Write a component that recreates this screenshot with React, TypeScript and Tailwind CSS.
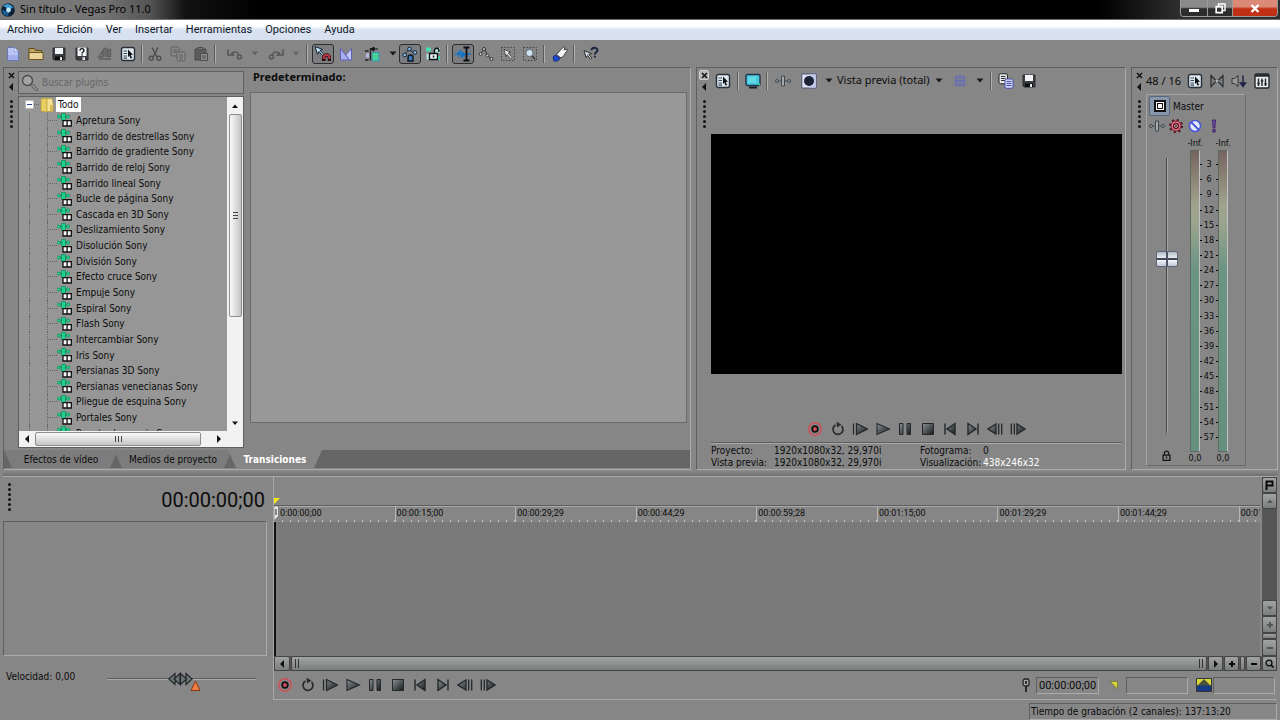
import { useState, type ReactNode } from "react";
import clsx from "clsx";

const MENUS = ["Archivo", "Edición", "Ver", "Insertar", "Herramientas", "Opciones", "Ayuda"];

const TRANSITIONS = [
  "Apretura Sony",
  "Barrido de destrellas Sony",
  "Barrido de gradiente Sony",
  "Barrido de reloj Sony",
  "Barrido lineal Sony",
  "Bucle de página Sony",
  "Cascada en 3D Sony",
  "Deslizamiento Sony",
  "Disolución Sony",
  "División Sony",
  "Efecto cruce Sony",
  "Empuje Sony",
  "Espiral Sony",
  "Flash Sony",
  "Intercambiar Sony",
  "Iris Sony",
  "Persianas 3D Sony",
  "Persianas venecianas Sony",
  "Pliegue de esquina Sony",
  "Portales Sony",
  "Puente de espejo Sony",
];

const RULER = [
  "0:00:00;00",
  "00:00:15;00",
  "00:00:29;29",
  "00:00:44;29",
  "00:00:59;28",
  "00:01:15;00",
  "00:01:29;29",
  "00:01:44;29",
  "00:01:59;28",
];

const DB_MARKS = [3, 6, 9, 12, 15, 18, 21, 24, 27, 30, 33, 36, 39, 42, 45, 48, 51, 54, 57];

const SUNKEN = "border border-t-[#5f5f5f] border-l-[#5f5f5f] border-r-[#ababab] border-b-[#ababab]";
const SCROLL_BTN =
  "flex items-center justify-center rounded-[2px] border border-[#444] bg-linear-to-b from-[#a2a4a4] to-[#7b7e7e]";

/* ---------- icons ---------- */

function Svg({ size = 16, children }: { size?: number; children: ReactNode }) {
  return (
    <svg width={size} height={size} viewBox="0 0 16 16" fill="none" aria-hidden="true" className="shrink-0">
      {children}
    </svg>
  );
}

const NewIcon = () => (
  <Svg>
    <path d="M2.500 1.500h7l4 4v9h-11z" fill="#b9c4f4" stroke="#6a78b8" />
    <path d="M9.500 1.500v4h4z" fill="#eef1ff" stroke="#8090cc" strokeWidth=".7" />
    <path d="M3 9h10v5H3z" fill="#93a2e4" opacity=".6" />
  </Svg>
);

const OpenIcon = () => (
  <Svg>
    <path d="M1 13.500v-11h5.500l1 2h6v9z" fill="#c5a45c" stroke="#5d4a20" />
    <path d="M1 13.500v-7h14v7z" fill="#ead49a" stroke="#6b5526" />
  </Svg>
);

const SaveIcon = () => (
  <Svg>
    <path d="M2 2h12v12H3l-1-1z" fill="#3a3d42" stroke="#2b2d30" />
    <path d="M4 2h8v6H4z" fill="#f1f3f5" />
    <path d="M4 10.500h8V14H4z" fill="#0a0a0a" />
    <path d="M9 11h2v3H9z" fill="#e8e8e8" />
  </Svg>
);

const SaveAsIcon = () => (
  <Svg>
    <path d="M2 2h12v12H3l-1-1z" fill="#3a3d42" stroke="#2b2d30" />
    <path d="M3.500 1.500h9V10h-9z" fill="#f1f3f5" />
    <path d="M6 4.500c0-2.500 4-2.500 4 0 0 1.500-2 1.400-2 3" stroke="#111" strokeWidth="1.400" />
    <path d="M7.300 8.200h1.500v1.300H7.300zM9 11h2v3H9z" fill="#111" />
    <path d="M8.500 11.200H11V14H8.500z" fill="#e8e8e8" />
  </Svg>
);

const RenderIcon = () => (
  <Svg>
    <path d="M1.500 11l4-6v6zM7 11V2.500h2V11M10.500 3.500h3v7h-3z" stroke="#5e5e5e" strokeWidth="1.300" />
    <path d="M2 13h12M10 5.500h4M10 8.500h4" stroke="#5e5e5e" strokeWidth="1.300" />
  </Svg>
);

const PropsIcon = () => (
  <Svg>
    <rect x="1.500" y="1.500" width="13" height="13" rx="2" fill="#dfe7ef" stroke="#27303a" strokeWidth="1.400" />
    <path d="M3.500 5H7M3.500 7.500H7M3.500 10H7M3.500 12.200H7" stroke="#364657" strokeWidth="1.200" />
    <path d="M8 3.500l5 5.200-2.300.2 1.500 3-1.600.7-1.300-3L8 11.200z" fill="#0c0f12" />
  </Svg>
);

const CutIcon = () => (
  <Svg>
    <path d="M5 1.500l5 9.500M11 1.500L6 11" stroke="#4e4e4e" strokeWidth="1.500" />
    <circle cx="4.200" cy="12.300" r="2" stroke="#4e4e4e" strokeWidth="1.400" />
    <circle cx="11.800" cy="12.300" r="2" stroke="#4e4e4e" strokeWidth="1.400" />
  </Svg>
);

const CopyIcon = () => (
  <Svg>
    <rect x="1" y="1" width="8" height="9" rx="1.500" stroke="#5e5e5e" />
    <path d="M3 4h4M3 6h4" stroke="#5e5e5e" />
    <rect x="7" y="6" width="8" height="9" rx="1.500" fill="#8c8c8c" stroke="#5e5e5e" />
    <path d="M9 9h4M9 11h4M9 13h4" stroke="#5e5e5e" />
  </Svg>
);

const PasteIcon = () => (
  <Svg>
    <path d="M2 3h11v11H2z" fill="#5d5d5d" stroke="#4b4b4b" />
    <path d="M5 1.500h5V4H5z" fill="#777" stroke="#4b4b4b" />
    <path d="M7.500 7.500h7v7h-7z" fill="#8f8f8f" stroke="#4b4b4b" />
    <path d="M9 10h4M9 12h4" stroke="#4b4b4b" />
  </Svg>
);

const UndoIcon = () => (
  <Svg>
    <path d="M1 3.500V9h5.500L4.700 7.200C8 5 11 6 11.500 9" stroke="#545454" strokeWidth="1.500" />
    <circle cx="12.500" cy="11" r="2" stroke="#545454" strokeWidth="1.400" />
  </Svg>
);

const RedoIcon = () => (
  <Svg>
    <path d="M15 3.500V9H9.500l1.800-1.800C8 5 5 6 4.500 9" stroke="#545454" strokeWidth="1.500" />
    <circle cx="3.500" cy="11" r="2" stroke="#545454" strokeWidth="1.400" />
  </Svg>
);

const SnapIcon = () => (
  <Svg>
    <path d="M0 .5l7.500 3-2.500 1 4 4-1.200 1.200-4-4.200-1.300 2.800z" fill="#c8e4f6" stroke="#0d2236" />
    <path d="M8.700 15v-3a2.900 2.900 0 0 1 5.800 0v3" stroke="#2a080c" strokeWidth="3.600" />
    <path d="M8.700 13v-1a2.900 2.900 0 0 1 5.800 0v1" stroke="#c03848" strokeWidth="2" />
  </Svg>
);

const FadeIcon = () => (
  <Svg>
    <path d="M2.500 2.500l9 11.500h-9z" fill="#a9aef2" stroke="#5c60b8" />
    <path d="M13.500 2.500v11.500h-2L7.700 9z" fill="#c3c6f8" stroke="#5c60b8" />
  </Svg>
);

const RippleIcon = () => (
  <Svg>
    <path d="M6.500 2v12.500M1 5h3.500M1 14h3.500" stroke="#222" strokeWidth="1.400" />
    <path d="M2 7.500h3v4H2z" fill="#b8bfe8" />
    <path d="M8 6.500h7V15H8z" fill="#45cf9c" stroke="#3c8fb0" />
    <path d="M7 3h7M7 3l3-2v4z" fill="#111" stroke="#111" />
  </Svg>
);

const EnvelopeLockIcon = () => (
  <Svg>
    <path d="M2 9l5-6 6 5" stroke="#1a2c44" />
    <circle cx="2.700" cy="9" r="1.800" fill="#8cc4ee" stroke="#123" />
    <circle cx="7.500" cy="3" r="1.800" fill="#8cc4ee" stroke="#123" />
    <circle cx="13" cy="6.500" r="1.800" fill="#8cc4ee" stroke="#123" />
    <path d="M6 15v-3.500a2.500 2.500 0 0 1 5 0V15z" fill="#3d78b8" stroke="#0b1726" strokeWidth="1.400" />
  </Svg>
);

const GroupLockIcon = () => (
  <Svg>
    <path d="M1 1.500h5v4H1zM9 10h6v4H9z" fill="#48dcb0" />
    <path d="M1.500 7.500h5v6h-5zM9 2h6v5H9z" fill="#b9e2e2" />
    <path d="M4.500 7.500h8v6h-8z" fill="#e7f6f4" stroke="#101416" strokeWidth="1.400" />
    <path d="M9.500 7V4.500a2.200 2.200 0 0 1 4.400 0V6" stroke="#101416" strokeWidth="1.500" />
    <path d="M8.500 9.500v2" stroke="#101416" strokeWidth="1.500" />
  </Svg>
);

const WaveIcon = () => (
  <Svg>
    <path d="M0 8h2l1-1.500L4 10l1.500-6L7 12l1-6 1 4 .8-2H16" stroke="#0f74c8" strokeWidth="1.300" />
    <path d="M8.500 1.500h6M8.500 14.500h6M11.500 1.500v13" stroke="#0a0d12" strokeWidth="1.800" />
  </Svg>
);

const EnvelopeIcon = () => (
  <Svg>
    <path d="M2 8l4.500-5 3 6.500L13.500 13" stroke="#333" />
    <g fill="#d4d4d4" stroke="#333">
      <circle cx="2.500" cy="8" r="1.500" />
      <circle cx="6" cy="3" r="1.500" />
      <circle cx="9.500" cy="9.500" r="1.500" />
      <circle cx="13.500" cy="13" r="1.500" />
    </g>
  </Svg>
);

const SelectIcon = () => (
  <Svg>
    <path d="M1.500 1.500h13v13h-13z" stroke="#444" strokeDasharray="1.500 1.500" />
    <path d="M4 3.500l6.500 2.500-2.300 1 4 4.500-1.400 1.200-3.800-4.200-1 2.200z" fill="#eee" stroke="#333" strokeWidth=".8" />
  </Svg>
);

const ZoomIcon = () => (
  <Svg>
    <path d="M1.500 1.500h13v13h-13z" stroke="#444" strokeDasharray="1.500 1.500" />
    <circle cx="7.500" cy="7" r="3.600" fill="#cfe2ee" stroke="#5b6f7c" />
    <path d="M10 10l3 3" stroke="#333" strokeWidth="1.600" />
  </Svg>
);

const HandIcon = () => (
  <Svg>
    <path d="M4.500 8.500L9 3.500 11.500.8l1.500.7-1 2.300 3-.6.300 1.600-1.300 1.200L12 9.500 9 12z" fill="#f4f4f4" stroke="#333" strokeWidth=".9" />
    <path d="M1.200 11l2-2L8 12.500 5.500 15H2z" fill="#1f49d6" stroke="#102a80" />
  </Svg>
);

const HelpIcon = () => (
  <Svg>
    <path d="M1 4.500l7.500 3-2.700 1 3 3.500-1.300 1-3-3.500-1.500 2z" fill="#cfd6dd" stroke="#222" strokeWidth=".9" />
    <path d="M8.500 4.300C8.500 1 14.500 1 14.500 4.200c0 2-2.700 2-2.700 4.300" stroke="#1b2440" strokeWidth="1.900" />
    <path d="M10.900 9.700h1.900v1.800h-1.900z" fill="#1b2440" />
  </Svg>
);

const MonitorIcon = () => (
  <Svg>
    <rect x="1" y="1.500" width="14" height="11" rx="1.500" fill="#45c9dd" stroke="#22324a" strokeWidth="1.400" />
    <path d="M3 4l8-1v7H3z" fill="#6fe0ea" opacity=".7" />
    <path d="M12 12l3-2v2.500z" fill="#2fd090" />
    <path d="M4 14.500h8" stroke="#16202c" strokeWidth="2" />
  </Svg>
);

const FxIcon = () => (
  <Svg>
    <path d="M3.500 8h9" stroke="#4a555c" />
    <path d="M6.500 3h3v10h-3z" fill="#a3a9ac" stroke="#3f4a50" />
    <circle cx="2" cy="8" r="1.500" fill="#8f979b" stroke="#3f4a50" />
    <circle cx="14" cy="8" r="1.500" fill="#8f979b" stroke="#3f4a50" />
  </Svg>
);

const SplitIcon = () => (
  <Svg>
    <path d="M.8 1h14.400v14H.8z" fill="#dfe3f4" stroke="#4c5674" />
    <path d="M8.500 1.500h6.200v13H8.500z" fill="#c3caea" />
    <circle cx="8" cy="8" r="5" fill="#1b2236" />
  </Svg>
);

const GridIcon = () => (
  <Svg>
    <path d="M4.500 2v12M8 2v12M11.500 2v12M2 4.500h12M2 8h12M2 11.500h12" stroke="#6a6fb4" strokeWidth="1.400" />
  </Svg>
);

const CopyFrameIcon = () => (
  <Svg>
    <rect x="1" y=".8" width="8.500" height="10" rx="1.500" fill="#e4e6ea" stroke="#222" />
    <path d="M3 3.500h4.500M3 5.500h4.500M3 7.500h4.500" stroke="#333" />
    <rect x="7" y="6" width="8" height="9.300" rx="1.500" fill="#cfd4fb" stroke="#4a52a8" />
    <path d="M8.500 8.500h5M8.500 10.500h5M8.500 12.500h5" stroke="#4a52a8" />
  </Svg>
);

const DownmixIcon = () => (
  <Svg>
    <path d="M2 2v12l4-4h4l4 4V2l-4 4.500H6z" fill="#7b7f82" />
    <path d="M2 1.500v13M14 1.500v13M2 2.500L6.500 7v2L2 13.500M14 2.500L9.500 7v2l4.500 4.500" stroke="#2c2f31" strokeWidth="1.200" />
    <path d="M6.500 8h3" stroke="#c0c4c6" strokeWidth="1.600" />
  </Svg>
);

const DimIcon = () => (
  <Svg>
    <path d="M1 5.500h2.500L7 2.500v11l-3.500-3H1z" fill="#979b9d" stroke="#333" />
    <path d="M12 2.500v10M9.500 10l2.500 3.500 2.500-3.500z" fill="#222446" stroke="#222446" strokeWidth="1.500" />
  </Svg>
);

const MixerIcon = () => (
  <Svg>
    <rect x="1" y="1" width="14" height="14" rx="1.500" fill="#e8eaec" stroke="#22272c" strokeWidth="1.400" />
    <path d="M1 2.500h14" stroke="#22272c" strokeWidth="2.500" />
    <path d="M4.500 5.500v7.500M8 5.500v7.500M11.500 5.500v7.500" stroke="#22272c" strokeWidth="1.400" />
    <path d="M3.300 10.500h2.500M6.800 8h2.500M10.300 11h2.500" stroke="#22272c" strokeWidth="1.400" />
  </Svg>
);

const GearIcon = () => (
  <Svg>
    <circle cx="8" cy="8" r="6" stroke="#4a1420" strokeWidth="2.200" strokeDasharray="2 2.712" />
    <circle cx="8" cy="8" r="5" fill="#ea7088" stroke="#7a1c30" />
    <circle cx="8" cy="8" r="2.400" fill="#f6d4da" stroke="#3a0c14" strokeWidth="1.200" />
    <circle cx="8" cy="8" r=".9" fill="#3a0c14" />
  </Svg>
);

const MuteIcon = () => (
  <Svg>
    <circle cx="8" cy="8" r="5.500" fill="#e8ecff" stroke="#4b5bd8" strokeWidth="1.600" />
    <path d="M4.500 4.500l7 7" stroke="#4b5bd8" strokeWidth="2" />
  </Svg>
);

const SoloIcon = () => (
  <Svg>
    <path d="M6.500 2h3l-.7 8H7.200z" fill="#7a4bb8" stroke="#38205c" strokeWidth=".9" />
    <path d="M6.800 11.500h2.400V14H6.800z" fill="#7a4bb8" stroke="#38205c" strokeWidth=".9" />
  </Svg>
);

const LockIcon = () => (
  <Svg size={11}>
    <path d="M3 7.500h10V15H3z" stroke="#111" strokeWidth="1.800" />
    <path d="M5 7V4.500a3 3 0 0 1 6 0V7M8 9.500v3" stroke="#111" strokeWidth="1.800" />
  </Svg>
);

const PluginIcon = () => (
  <svg width="15" height="14" viewBox="0 0 15 14" fill="none" aria-hidden="true" className="shrink-0">
    <path d="M2 3.500h10" stroke="#0b5c3c" strokeWidth="1.300" />
    <path d="M4.500.5h4v7h-4z" fill="#1fd08c" stroke="#0c8a58" strokeWidth=".7" />
    <circle cx="1.900" cy="3.600" r="1.600" fill="#1fd08c" stroke="#0c8a58" strokeWidth=".6" />
    <circle cx="11" cy="3.600" r="1.700" fill="#1fd08c" stroke="#0c8a58" strokeWidth=".6" />
    <path d="M6 7.700h8.300v5.300H6z" fill="#f4f4f4" stroke="#111" strokeWidth="1.300" />
    <path d="M10.100 8v5" stroke="#111" strokeWidth="1.300" />
  </svg>
);

const FolderIcon = () => (
  <Svg>
    <path d="M2 2l6-1v14l-6-1z" fill="#e9cf62" stroke="#b8992e" strokeWidth=".6" />
    <path d="M8 1.500h5l1 5v8H8z" fill="#f3e295" stroke="#b8992e" strokeWidth=".6" />
    <path d="M11 8h2.500v6H11z" fill="#d8b84a" />
  </Svg>
);

const SearchIcon = () => (
  <svg width="18" height="18" viewBox="0 0 18 18" fill="none" aria-hidden="true" className="shrink-0">
    <circle cx="6.500" cy="6.500" r="5" fill="#a3a3a3" stroke="#4a4a4a" strokeWidth="1.300" />
    <path d="M10 11.500l1.500-1.500 5.500 5.500-1.700 1.500z" fill="#a0a0a0" stroke="#4a4a4a" />
  </svg>
);

function Caret({ dim = false }: { dim?: boolean }) {
  return (
    <svg width="8" height="5" viewBox="0 0 8 5" aria-hidden="true">
      <path d="M.5.5h7L4 4.500z" fill={dim ? "#666" : "#1a1a1a"} />
    </svg>
  );
}

type ArrowDir = "up" | "down" | "left" | "right";

const ARROWS: Record<ArrowDir, string> = {
  up: "M1 6h6L4 2.500z",
  down: "M1 2.500h6L4 6z",
  left: "M6 0v8L2 4z",
  right: "M2 0v8l4-4z",
};

function Arrow({ dir, color = "#111" }: { dir: ArrowDir; color?: string }) {
  return (
    <svg width="8" height="8" viewBox="0 0 8 8" aria-hidden="true">
      <path d={ARROWS[dir]} fill={color} />
    </svg>
  );
}

function Sign({ plus = false, color = "#0a0a0a" }: { plus?: boolean; color?: string }) {
  return (
    <svg width="8" height="8" viewBox="0 0 8 8" aria-hidden="true">
      <path d={plus ? "M1 4h6M4 1v6" : "M1 4h6"} stroke={color} strokeWidth="2" />
    </svg>
  );
}

/* ---------- small controls ---------- */

interface ToolProps {
  label: string;
  children: ReactNode;
  pressed?: boolean;
  className?: string;
}

function Tool({ label, children, pressed, className }: ToolProps) {
  return (
    <button
      type="button"
      aria-label={label}
      title={label}
      className={clsx(
        "flex h-5 shrink-0 items-center justify-center",
        pressed && "rounded-[3px] border border-[#2c2c2c] bg-[#7b7d80]",
        className ?? "w-[23px]"
      )}
    >
      {children}
    </button>
  );
}

function Sep({ className }: { className: string }) {
  return (
    <span className={clsx("flex h-[18px] shrink-0 pl-[2px]", className)}>
      <span className="w-px bg-[#5a5a5a]" />
      <span className="w-px bg-[#b0b0b0]" />
    </span>
  );
}

function Grip() {
  return (
    <div className="flex flex-col gap-[2px]" aria-hidden="true">
      {[0, 1, 2, 3, 4, 5].map((i) => (
        <span key={i} className="h-[3px] w-[3px] rounded-full bg-[#151515]" />
      ))}
    </div>
  );
}

function DockHandle({ boxed = false }: { boxed?: boolean }) {
  return (
    <div className="flex w-[14px] shrink-0 flex-col items-center pt-[2px]">
      <button
        type="button"
        aria-label="Cerrar"
        className={clsx(
          "flex h-[10px] w-[10px] items-center justify-center rounded-[2px]",
          boxed && "border border-[#d0d0d0] bg-[#b5b5b5]"
        )}
      >
        <svg width="7" height="7" viewBox="0 0 7 7" aria-hidden="true" className="shrink-0">
          <path d="M1 1l5 5M6 1L1 6" stroke="#111" strokeWidth="1.500" />
        </svg>
      </button>
      <button type="button" aria-label="Contraer" className="mt-[3px] mb-[9px]">
        <Arrow dir="left" />
      </button>
      <Grip />
    </div>
  );
}

function Transport() {
  const steel = "url(#steel)";
  const items: [string, ReactNode][] = [
    [
      "Grabar",
      <>
        <circle cx="8" cy="8" r="6.200" stroke="#cf5058" strokeWidth="1.500" />
        <circle cx="8" cy="8" r="2.800" fill="#cf5058" stroke="#111" strokeWidth="1.800" />
      </>,
    ],
    [
      "Reproducir en bucle",
      <>
        <path d="M11.500 4.800A5 5 0 1 1 5.500 4" stroke="#2a2d2e" strokeWidth="1.800" />
        <path d="M6.500.8l5 2.700-4.500 3z" fill="#2a2d2e" />
      </>,
    ],
    ["Reproducir desde inicio", <path d="M1.500 2.500v11M4.500 2.500l11 5.500-11 5.500z" fill={steel} stroke="#24282a" strokeWidth="1.200" />],
    ["Reproducir", <path d="M2 2.500L14.500 8 2 13.500z" fill={steel} stroke="#24282a" strokeWidth="1.100" />],
    ["Pausa", <path d="M2.500 2.500H6v11H2.500zM10 2.500h3.500v11H10z" fill={steel} stroke="#24282a" />],
    ["Detener", <path d="M2.500 2.500h11v11h-11z" fill={steel} stroke="#24282a" />],
    ["Ir al inicio", <path d="M3 2.500v11M13 2.500v11L5 8z" fill={steel} stroke="#24282a" strokeWidth="1.400" />],
    ["Ir al final", <path d="M13 2.500v11M3 2.500v11L11 8z" fill={steel} stroke="#24282a" strokeWidth="1.400" />],
    ["Fotograma anterior", <path d="M9 3v10L1 8zM11.700 2.500v11M14.700 2.500v11" fill={steel} stroke="#24282a" strokeWidth="1.300" />],
    ["Fotograma siguiente", <path d="M7 3v10l8-5zM1.300 2.500v11M4.300 2.500v11" fill={steel} stroke="#24282a" strokeWidth="1.300" />],
  ];
  return (
    <div className="flex w-[225px] shrink-0">
      {items.map(([label, shape]) => (
        <button key={label} type="button" aria-label={label} className="flex h-5 flex-1 items-center justify-center">
          <Svg>{shape}</Svg>
        </button>
      ))}
    </div>
  );
}

/* ---------- window chrome ---------- */

function TitleBar() {
  return (
    <header className="flex h-5 shrink-0 justify-between border-b border-[#6e6e6e] bg-[linear-gradient(90deg,#7a7a7a_0,#757575_100px,#555_150px,#121212_185px,#000_260px,#000_1100px,#2e2e2e_1180px)]">
      <div className="flex items-center gap-[5px] pl-px">
        <svg width="14" height="14" viewBox="0 0 14 14" aria-hidden="true">
          <circle cx="7" cy="7" r="6.800" fill="#0a2238" />
          <path d="M2 3a6 6 0 0 1 10 2L8 6z" fill="#3d9fd8" />
          <path d="M1 7a6 6 0 0 0 6 6l1-4z" fill="#1b5e94" />
          <circle cx="7.500" cy="7" r="2.400" fill="#bfe9fa" />
        </svg>
        <h1 className="font-['Noto_Sans',sans-serif] text-[11px] text-black">Sin título - Vegas Pro 11.0</h1>
      </div>
      <div className="mr-[2px] flex h-[17px] overflow-hidden rounded-b-[4px] border border-t-0 border-[#9a9a9a]">
        <button type="button" aria-label="Minimizar" className="flex w-[27px] items-center justify-center border-r border-[#9a9a9a] bg-linear-to-b from-[#8a8a8a] from-45% to-[#2c2c2c] to-55%">
          <span className="mt-1 h-[3px] w-[10px] bg-white" />
        </button>
        <button type="button" aria-label="Restaurar" className="flex w-[25px] items-center justify-center border-r border-[#9a9a9a] bg-linear-to-b from-[#8a8a8a] from-45% to-[#2c2c2c] to-55%">
          <svg width="11" height="11" viewBox="0 0 11 11" fill="none" aria-hidden="true">
            <path d="M3.500 3V1h6.500v6.500H8" stroke="#fff" strokeWidth="1.400" />
            <path d="M1.200 3.700h6v6h-6z" stroke="#fff" strokeWidth="1.700" />
          </svg>
        </button>
        <button type="button" aria-label="Cerrar" className="flex w-[44px] items-center justify-center bg-linear-to-b from-[#dc8a78] from-40% to-[#c03014] to-55%">
          <svg width="10" height="9" viewBox="0 0 10 9" aria-hidden="true">
            <path d="M1.500 1l7 7M8.500 1l-7 7" stroke="#fff" strokeWidth="2.400" />
          </svg>
        </button>
      </div>
    </header>
  );
}

function MenuBar() {
  return (
    <nav className="flex h-5 shrink-0 items-center gap-[13px] bg-linear-to-b from-white from-30% to-[#d8e1f0] to-50% pt-px pl-[7px] font-[Roboto,sans-serif] text-[11px]">
      {MENUS.map((m) => (
        <button key={m} type="button" className="text-[#101828]">
          {m}
        </button>
      ))}
    </nav>
  );
}

function Toolbar() {
  return (
    <div className="flex h-[27px] shrink-0 items-center pl-px">
      <Tool label="Nuevo"><NewIcon /></Tool>
      <Tool label="Abrir"><OpenIcon /></Tool>
      <Tool label="Guardar"><SaveIcon /></Tool>
      <Tool label="Guardar como"><SaveAsIcon /></Tool>
      <Tool label="Procesar como"><RenderIcon /></Tool>
      <Tool label="Propiedades"><PropsIcon /></Tool>
      <Sep className="w-1" />
      <Tool label="Cortar"><CutIcon /></Tool>
      <Tool label="Copiar"><CopyIcon /></Tool>
      <Tool label="Pegar"><PasteIcon /></Tool>
      <Sep className="w-[11px]" />
      <Tool label="Deshacer"><UndoIcon /></Tool>
      <Tool label="Historial de deshacer" className="w-[18px]"><Caret dim /></Tool>
      <Tool label="Rehacer"><RedoIcon /></Tool>
      <Tool label="Historial de rehacer" className="w-[17px]"><Caret dim /></Tool>
      <Sep className="w-[8px]" />
      <Tool label="Habilitar ajuste" pressed className="w-[22px]"><SnapIcon /></Tool>
      <Tool label="Fundidos automáticos"><FadeIcon /></Tool>
      <Tool label="Rizo automático" className="w-[29px]"><RippleIcon /></Tool>
      <Tool label="Modo de rizo" className="w-[13px]"><Caret /></Tool>
      <Tool label="Bloquear envolventes" pressed className="w-[22px]"><EnvelopeLockIcon /></Tool>
      <Tool label="Ignorar agrupación"><GroupLockIcon /></Tool>
      <Sep className="w-[8px]" />
      <Tool label="Edición normal" pressed className="w-[22px]"><WaveIcon /></Tool>
      <Tool label="Edición de envolvente"><EnvelopeIcon /></Tool>
      <Tool label="Selección" className="w-[22px]"><SelectIcon /></Tool>
      <Tool label="Zoom" className="w-[22px]"><ZoomIcon /></Tool>
      <Sep className="w-[7px]" />
      <Tool label="Tutoriales"><HandIcon /></Tool>
      <Sep className="w-2" />
      <Tool label="¿Qué es esto?"><HelpIcon /></Tool>
    </div>
  );
}

/* ---------- docked panels ---------- */

function PluginTree() {
  return (
    <div className="flex min-h-0 flex-1 flex-col border border-[#5f5f5f] bg-[#969696]">
      <div className="flex min-h-0 flex-1">
        <div className="min-h-0 flex-1 overflow-hidden">
          <ul className="flex h-[344px] flex-col" role="tree" aria-label="Transiciones">
            <li role="treeitem" aria-expanded="true" className="flex min-h-0 flex-1 items-center pl-[6px]">
              <button type="button" aria-label="Contraer Todo" className="flex h-[9px] w-[9px] items-center justify-center rounded-[1px] border border-[#bbb] bg-white">
                <span className="h-px w-[5px] bg-[#2b3c9c]" />
              </button>
              <span className="w-[5px] border-t border-dotted border-[#666]" />
              <FolderIcon />
              <span className="ml-[1px] bg-white px-[2px] leading-[15px]">Todo</span>
            </li>
            {TRANSITIONS.map((name) => (
              <li key={name} role="treeitem" className="flex min-h-0 flex-1 items-center">
                <span className="ml-[10px] w-[18px] self-stretch border-l border-dotted border-[#666]" />
                <span className="flex w-[10px] items-center self-stretch border-l border-dotted border-[#666]">
                  <span className="w-full border-t border-dotted border-[#666]" />
                </span>
                <PluginIcon />
                <span className="ml-1 whitespace-nowrap">{name}</span>
              </li>
            ))}
          </ul>
        </div>
        <div className="flex w-4 shrink-0 flex-col items-center bg-[#f2f2f2]">
          <button type="button" aria-label="Subir" className="flex h-[17px] items-center"><Arrow dir="up" /></button>
          <div className="flex h-[203px] w-[13px] items-center justify-center rounded-[2px] border border-[#8d8d8d] bg-linear-to-r from-[#fafafa] to-[#c4c4c4]">
            <span className="h-[7px] w-[5px] border-y border-[#444] bg-[linear-gradient(#444,#444)] bg-[length:100%_1px] bg-center bg-no-repeat" />
          </div>
          <button type="button" aria-label="Bajar" className="mt-auto flex h-[17px] items-center"><Arrow dir="down" /></button>
        </div>
      </div>
      <div className="flex h-4 shrink-0 items-center bg-[#f2f2f2] pr-4">
        <button type="button" aria-label="Izquierda" className="flex w-4 justify-center"><Arrow dir="left" /></button>
        <div className="flex h-[14px] w-[166px] items-center justify-center rounded-[2px] border border-[#8d8d8d] bg-linear-to-b from-[#fafafa] to-[#c4c4c4]">
          <span className="h-[6px] w-[7px] border-x border-[#444] bg-[linear-gradient(#444,#444)] bg-[length:1px_100%] bg-center bg-no-repeat" />
        </div>
        <button type="button" aria-label="Derecha" className="ml-auto flex w-4 justify-center"><Arrow dir="right" /></button>
      </div>
    </div>
  );
}

const TABS = ["Efectos de vídeo", "Medios de proyecto", "Transiciones"];

function PluginDock() {
  const [tab, setTab] = useState("Transiciones");
  const [query, setQuery] = useState("");
  return (
    <section className={clsx("flex min-w-0 flex-1 flex-col", SUNKEN)}>
      <div className="flex min-h-0 flex-1">
        <DockHandle />
        <div className="flex w-[226px] shrink-0 flex-col gap-[2px] pt-[3px] pb-[2px]">
          <label className="flex h-[23px] shrink-0 items-center gap-[3px] border border-[#5f5f5f] bg-[#919191] pl-[2px]">
            <SearchIcon />
            <input
              type="search"
              aria-label="Buscar plugins"
              placeholder="Buscar plugins"
              value={query}
              onChange={(e) => setQuery(e.target.value)}
              className="min-w-0 flex-1 bg-transparent text-[10px] outline-none placeholder:text-[#666]"
            />
          </label>
          <PluginTree />
        </div>
        <div className="mr-[3px] mb-[27px] ml-[6px] flex min-w-0 flex-1 flex-col">
          <h2 className="h-[24px] pt-[1px] pl-[3px] font-['Noto_Sans',sans-serif] text-[11px] leading-[16px] font-bold">Predeterminado:</h2>
          <div className="flex-1 border border-[#6a6a6a] bg-[#989898]" />
        </div>
      </div>
      <div role="tablist" className="mb-px flex h-[18px] shrink-0 bg-[#666]">
        {TABS.map((t, i) => (
          <button
            key={t}
            type="button"
            role="tab"
            aria-selected={tab === t}
            onClick={() => setTab(t)}
            className={clsx(
              "flex items-center justify-center text-[10px] [clip-path:polygon(0_0,100%_0,calc(100%-8px)_100%,8px_100%)]",
              i === 0 ? "w-[114px]" : "-ml-[4px]",
              i === 1 && "w-[118px]",
              i === 2 && "w-[94px]",
              tab === t ? "bg-[#868686] font-bold text-white" : "bg-[#7c7c7c]"
            )}
          >
            {t}
          </button>
        ))}
      </div>
    </section>
  );
}

function PreviewDock() {
  return (
    <section className={clsx("flex w-[430px] shrink-0", SUNKEN)}>
      <DockHandle boxed />
      <div className="mr-[3px] flex min-w-0 flex-1 flex-col">
        <div className="flex h-[25px] shrink-0 items-center">
          <Tool label="Propiedades de vídeo" className="w-[24px]"><PropsIcon /></Tool>
          <Sep className="w-[6px]" />
          <Tool label="Monitor externo"><MonitorIcon /></Tool>
          <Sep className="w-[6px]" />
          <Tool label="Efectos de salida" className="w-[26px]"><FxIcon /></Tool>
          <Tool label="Vista dividida" className="w-[26px]"><SplitIcon /></Tool>
          <Tool label="Modo de vista dividida" className="w-[14px]"><Caret /></Tool>
          <button type="button" className="flex h-5 items-center gap-[6px] pl-px font-['Noto_Sans',sans-serif] text-[11px] whitespace-nowrap">
            Vista previa (total) <Caret />
          </button>
          <Tool label="Superposiciones" className="ml-[5px] w-[24px]"><GridIcon /></Tool>
          <Tool label="Opciones de superposición" className="w-[16px]"><Caret /></Tool>
          <Sep className="w-[6px]" />
          <Tool label="Copiar instantánea"><CopyFrameIcon /></Tool>
          <Tool label="Guardar instantánea"><SaveIcon /></Tool>
        </div>
        <div className="flex min-h-0 flex-1 items-center">
          <div className="aspect-[411/240] w-full bg-black" />
        </div>
        <div className="flex h-[27px] shrink-0 items-center justify-center">
          <Transport />
        </div>
        <dl className="grid shrink-0 grid-cols-[63px_146px_63px_1fr] border-t border-[#5f5f5f] pt-[2px] leading-[12px] whitespace-nowrap shadow-[inset_0_1px_0_#a8a8a8]">
          <dt>Proyecto:</dt>
          <dd>1920x1080x32, 29,970i</dd>
          <dt>Fotograma:</dt>
          <dd>0</dd>
          <dt>Vista previa:</dt>
          <dd>1920x1080x32, 29,970i</dd>
          <dt>Visualización:</dt>
          <dd className="text-white">438x246x32</dd>
        </dl>
      </div>
    </section>
  );
}

function Meter() {
  return (
    <div className="flex w-[10px] shrink-0 flex-col items-center whitespace-nowrap">
      <span className="text-[9px] leading-[14px]">-Inf.</span>
      <div className="w-full flex-1 border border-[#5d6a60] border-r-[#c2c2c2] bg-[linear-gradient(#76645f_0,#a0a28e_18%,#9aa48e_24%,#6a9484_40%,#659080)]" />
      <span className="text-[9px] leading-[13px]">0,0</span>
    </div>
  );
}

function MixerDock() {
  return (
    <section className={clsx("flex w-[147px] shrink-0", SUNKEN)}>
      <DockHandle />
      <div className="mb-[3px] flex min-w-0 flex-1 flex-col">
        <div className="flex h-[26px] shrink-0 items-center">
          <span className="w-[38px] font-['Noto_Sans',sans-serif] text-[11px] whitespace-nowrap">48 / 16</span>
          <Tool label="Propiedades de audio" className="w-[22px]"><PropsIcon /></Tool>
          <Tool label="Mezcla descendente" className="w-[22px]"><DownmixIcon /></Tool>
          <Tool label="Atenuar salida" className="w-[22px]"><DimIcon /></Tool>
          <Tool label="Abrir mezclador" className="w-[24px]"><MixerIcon /></Tool>
        </div>
        <div className="mr-[31px] flex min-h-0 flex-1 flex-col border border-t-[#a4a4a4] border-r-[#6a6a6a] border-b-[#6a6a6a] border-l-[#a4a4a4] pt-[1px]">
          <div className="flex items-center gap-[3px] pl-[2px]">
            <button type="button" aria-label="Bus maestro" className="flex h-5 w-[21px] items-center justify-center rounded-[2px] border border-[#54657c] bg-[#8796aa]">
              <span className="flex h-[12px] w-[12px] items-center justify-center border-2 border-[#111] bg-white">
                <span className="h-[6px] w-[6px] border border-[#111]" />
              </span>
            </button>
            <span>Master</span>
          </div>
          <div className="flex h-5 items-center">
            <Tool label="Efectos del bus" className="w-[19px]"><FxIcon /></Tool>
            <Tool label="Automatización" className="w-[19px]"><GearIcon /></Tool>
            <Tool label="Silencio" className="w-[19px]"><MuteIcon /></Tool>
            <Tool label="Solo" className="w-[19px]"><SoloIcon /></Tool>
          </div>
          <div className="flex min-h-0 flex-1">
            <div className="mr-[4px] flex w-[39px] shrink-0 flex-col items-center pt-[22px] pb-[2px]">
              <input
                type="range"
                aria-label="Volumen maestro"
                min={0}
                max={100}
                defaultValue={64}
                className="min-h-0 w-[22px] flex-1 appearance-none bg-[linear-gradient(90deg,#444_50%,#a8a8a8_50%)] bg-[length:2px_100%] bg-center bg-no-repeat [direction:rtl] [writing-mode:vertical-lr] [&::-webkit-slider-thumb]:h-4 [&::-webkit-slider-thumb]:w-[22px] [&::-webkit-slider-thumb]:appearance-none [&::-webkit-slider-thumb]:rounded-[2px] [&::-webkit-slider-thumb]:border [&::-webkit-slider-thumb]:border-[#5b6470] [&::-webkit-slider-thumb]:bg-[linear-gradient(90deg,transparent_9px,#4b5563_9px,#4b5563_11px,transparent_11px),linear-gradient(#b4bcc8_0,#e8ecf2_6px,#3c4654_6px,#3c4654_8px,#f4f6fa_8px,#c0c8d4_14px)]"
              />
              <button type="button" aria-label="Bloquear canales" className="mt-[14px] flex h-[16px] items-center">
                <LockIcon />
              </button>
            </div>
            <Meter />
            <ul className="mt-[21px] mb-[20px] flex w-[18px] shrink-0 flex-col text-[9px]">
              {DB_MARKS.map((db) => (
                <li key={db} className="flex min-h-0 flex-1 items-center justify-between leading-[9px]">
                  <span className="h-px w-[2px] bg-black" />
                  {db}
                  <span className="h-px w-[2px] bg-black" />
                </li>
              ))}
            </ul>
            <Meter />
          </div>
        </div>
      </div>
    </section>
  );
}

/* ---------- timeline ---------- */

function TrackList() {
  return (
    <section className="flex w-[270px] shrink-0 flex-col pr-[3px] pl-[3px]">
      <div className="flex h-[44px] shrink-0 justify-between pt-[6px] pl-[5px]">
        <Grip />
        <output className="pr-[2px] font-[Roboto,sans-serif] text-[20px] leading-[34px]">00:00:00;00</output>
      </div>
      <div className={clsx("min-h-0 flex-1", SUNKEN)} />
      <div className="flex h-[44px] shrink-0 items-start pt-[12px] pl-[3px]">
        <label htmlFor="rate" className="w-[101px] leading-[18px]">Velocidad: 0,00</label>
        <div className="relative flex h-[22px] w-[149px] items-center">
          <input
            id="rate"
            type="range"
            min={-20}
            max={20}
            defaultValue={0}
            className="h-[22px] w-full appearance-none bg-[linear-gradient(#5c5c5c_50%,#adadad_50%)] bg-[length:100%_2px] bg-center bg-no-repeat [&::-webkit-slider-thumb]:h-3 [&::-webkit-slider-thumb]:w-6 [&::-webkit-slider-thumb]:appearance-none [&::-webkit-slider-thumb]:bg-transparent"
          />
          <svg width="40" height="24" viewBox="0 0 40 24" fill="none" aria-hidden="true" className="pointer-events-none absolute top-0 left-[61px]">
            <path d="M7 5.500v11L.8 11zM12 5.500v11L6 11zM12.500 5.500v11l6-5.500zM18 5.500v11l6.200-5.500z" fill="#6f7678" stroke="#1e2426" strokeWidth="1.100" />
            <path d="M27.500 13L32 22.500h-9z" fill="#f08048" stroke="#8a3410" />
          </svg>
        </div>
      </div>
    </section>
  );
}

function Ruler() {
  return (
    <div className="flex h-[17px] shrink-0 overflow-hidden border-t border-[#5f5f5f] font-[Roboto,sans-serif] text-[9px] shadow-[inset_0_1px_0_#a8a8a8]">
      {RULER.map((t, i) => (
        <div key={t} className="flex w-[12.23%] shrink-0 flex-col justify-between border-l border-[#b4b4b4]">
          <span className={clsx("leading-[14px] whitespace-nowrap", i === 0 ? "pl-[5px]" : "pl-px")}>{t}</span>
          <span className="flex h-[3px] shrink-0">
            {Array.from({ length: 15 }, (_, n) => (
              <span key={n} className="flex-1 border-r border-b border-r-[#c4c4c4] border-b-[#6a6a6a]" />
            ))}
          </span>
        </div>
      ))}
    </div>
  );
}

function VerticalScroll() {
  return (
    <div className="ml-[2px] flex w-[15px] shrink-0 flex-col bg-[#565656]">
      <button type="button" aria-label="Marcadores" className={clsx(SCROLL_BTN, "h-4")}>
        <svg width="9" height="10" viewBox="0 0 9 10" fill="none" aria-hidden="true">
          <path d="M1.500 10V1.500h6v4h-5" stroke="#0a0a0a" strokeWidth="2" />
        </svg>
      </button>
      <button type="button" aria-label="Subir pistas" className={clsx(SCROLL_BTN, "h-4")}><Arrow dir="up" color="#555" /></button>
      <span className="flex-1" />
      <button type="button" aria-label="Bajar pistas" className={clsx(SCROLL_BTN, "h-4")}><Arrow dir="down" color="#555" /></button>
      <button type="button" aria-label="Aumentar altura" className={clsx(SCROLL_BTN, "h-[17px]")}><Sign plus color="#555" /></button>
      <span className={clsx(SCROLL_BTN, "h-[6px]")} />
      <button type="button" aria-label="Reducir altura" className={clsx(SCROLL_BTN, "h-[17px]")}><Sign color="#555" /></button>
    </div>
  );
}

function HorizontalScroll() {
  return (
    <div className="flex h-[15px] shrink-0 gap-px bg-[#555]">
      <button type="button" aria-label="Desplazar a la izquierda" className={clsx(SCROLL_BTN, "w-[16px]")}><Arrow dir="left" /></button>
      <div className={clsx(SCROLL_BTN, "min-w-0 flex-1 justify-between! px-[3px]")}>
        <span className="h-[9px] w-[4px] border-x border-[#333]" />
        <span className="h-[9px] w-[4px] border-x border-[#333]" />
      </div>
      <button type="button" aria-label="Desplazar a la derecha" className={clsx(SCROLL_BTN, "w-[15px]")}><Arrow dir="right" /></button>
      <button type="button" aria-label="Acercar" className={clsx(SCROLL_BTN, "w-[15px]")}><Sign plus /></button>
      <span className={clsx(SCROLL_BTN, "w-[5px]")} />
      <button type="button" aria-label="Alejar" className={clsx(SCROLL_BTN, "w-[15px]")}><Sign /></button>
      <button type="button" aria-label="Herramienta de zoom" className={clsx(SCROLL_BTN, "w-[15px]")}>
        <svg width="9" height="9" viewBox="0 0 9 9" fill="none" aria-hidden="true">
          <circle cx="4" cy="4" r="2.900" stroke="#0a0a0a" strokeWidth="1.300" />
          <path d="M6 6l2.500 2.500" stroke="#0a0a0a" strokeWidth="1.600" />
        </svg>
      </button>
    </div>
  );
}

function Timeline() {
  return (
    <section className="mr-[3px] flex min-w-0 flex-1 flex-col border-l border-[#a8a8a8]">
      <div className="flex min-h-0 flex-1">
        <div className="relative flex min-w-0 flex-1 flex-col">
          <div className="flex h-[28px] shrink-0 items-end">
            <svg width="6" height="7" viewBox="0 0 6 7" aria-hidden="true">
              <path d="M0 0h6L0 6z" fill="#f6ee10" />
            </svg>
          </div>
          <Ruler />
          <div className="min-h-0 flex-1 border-l-2 border-[#111] bg-[#7a7a7a]" />
          {/* playhead */}
          <svg width="5" height="16" viewBox="0 0 5 16" aria-hidden="true" className="absolute top-[29px] left-0">
            <path d="M0 0h4.500v10L0 15z" fill="#e8e8e8" stroke="#555" strokeWidth=".6" />
            <path d="M2 3v6" stroke="#222" />
          </svg>
        </div>
        <VerticalScroll />
      </div>
      <HorizontalScroll />
      <div className="flex h-[29px] shrink-0 items-center justify-between border-b border-[#a8a8a8]">
        <Transport />
        <div className="flex items-center pr-[2px]">
          <svg width="8" height="15" viewBox="0 0 8 15" fill="none" aria-hidden="true">
            <rect x="1" y="1" width="6" height="7" rx="2" fill="#a4a8aa" stroke="#222" strokeWidth="1.300" />
            <path d="M4 3v3M4 8v6" stroke="#222" strokeWidth="1.800" />
          </svg>
          <input
            aria-label="Posición del cursor"
            defaultValue="00:00:00;00"
            className={clsx("ml-[6px] h-[17px] w-[63px] bg-transparent pl-[2px] font-[Roboto,sans-serif] text-[11px] outline-none", SUNKEN)}
          />
          <svg width="8" height="8" viewBox="0 0 8 8" aria-hidden="true" className="mr-[8px] ml-[11px]">
            <path d="M0 .5h7.500V8z" fill="#d8d83c" stroke="#666a20" strokeWidth=".7" />
          </svg>
          <input aria-label="Inicio de selección" className={clsx("h-[17px] w-[62px] bg-transparent outline-none", SUNKEN)} />
          <svg width="16" height="14" viewBox="0 0 16 14" aria-hidden="true" className="mr-px ml-[8px]">
            <path d="M.5.500h15v13H.5z" fill="#d8d83c" stroke="#333" />
            <path d="M1 8l7-7 7 7z" fill="#4c5236" />
            <path d="M1 7.500h14V13H1z" fill="#173a86" />
          </svg>
          <input aria-label="Fin de selección" className={clsx("h-[17px] w-[62px] bg-transparent outline-none", SUNKEN)} />
        </div>
      </div>
    </section>
  );
}

export default function App() {
  return (
    <div className="flex h-screen min-h-[640px] flex-col overflow-hidden bg-[#868686] font-['DejaVu_Sans_Condensed','Noto_Sans',sans-serif] text-[10px] text-[#0c0c0c]">
      <svg width="0" height="0" className="absolute" aria-hidden="true">
        <defs>
          <linearGradient id="steel" x1="0" y1="0" x2="1" y2="1">
            <stop offset="0" stopColor="#8a9295" />
            <stop offset="1" stopColor="#14181a" />
          </linearGradient>
        </defs>
      </svg>
      <TitleBar />
      <MenuBar />
      <Toolbar />
      <main className="flex min-h-0 flex-1 gap-[5px] pr-[2px] pl-[3px]">
        <PluginDock />
        <PreviewDock />
        <MixerDock />
      </main>
      <div className="mx-[3px] h-[7px] shrink-0 border-b border-[#aaa] bg-linear-to-b from-[#8c8c8c] to-[#707070]" />
      <div className="flex h-[223px] shrink-0 gap-[3px]">
        <TrackList />
        <Timeline />
      </div>
      <footer className="flex h-5 shrink-0 justify-end pt-[3px] pr-[3px]">
        <p className={clsx("w-[248px] pl-[1px] leading-[15px] whitespace-nowrap", SUNKEN)}>
          Tiempo de grabación (2 canales): 137:13:20
        </p>
      </footer>
    </div>
  );
}
